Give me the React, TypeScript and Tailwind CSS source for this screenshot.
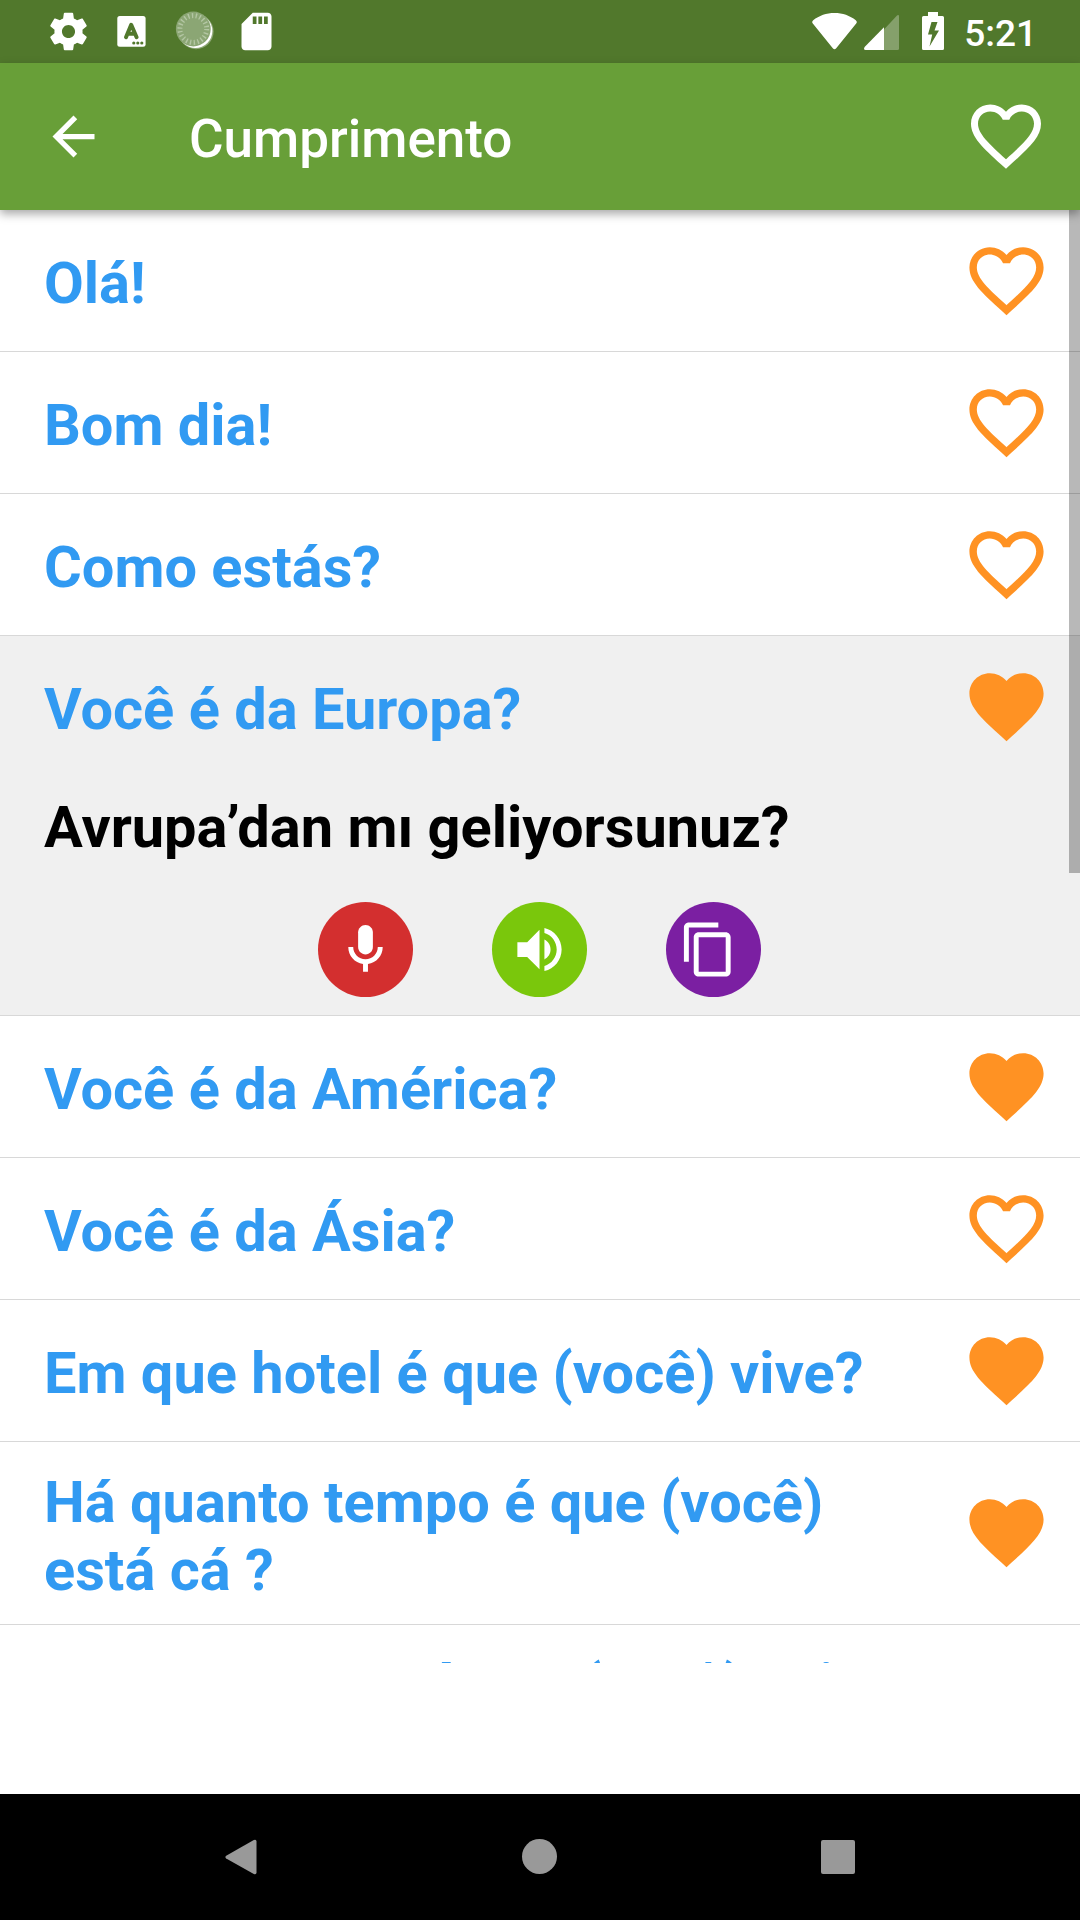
import { useState } from 'react';

type Phrase = {
    text: string;
    translation?: string;
    liked: boolean;
    tall?: boolean;
};

const phrases: Phrase[] = [
    { text: 'Olá!', liked: false },
    { text: 'Bom dia!', liked: false },
    { text: 'Como estás?', liked: false },
    { text: 'Você é da Europa?', translation: 'Avrupa’dan mı geliyorsunuz?', liked: true },
    { text: 'Você é da América?', liked: true },
    { text: 'Você é da Ásia?', liked: false },
    { text: 'Em que hotel é que (você) vive?', liked: true },
    { text: 'Há quanto tempo é que (você) está cá ?', liked: true, tall: true },
    { text: 'Quanto tempo é que (você) vai ficar cá ?', liked: false, tall: true },
];

const HeartIcon = ({ filled, className }: { filled: boolean; className: string }) => (
    <svg viewBox="0 0 24 24" fill="currentColor" className={className}>
        {filled ? (
            <path d="M12 21.35l-1.45-1.32C5.4 15.36 2 12.28 2 8.5 2 5.42 4.42 3 7.5 3c1.74 0 3.41.81 4.5 2.09C13.09 3.81 14.76 3 16.5 3 19.58 3 22 5.42 22 8.5c0 3.78-3.4 6.86-8.55 11.54L12 21.35z" />
        ) : (
            <path d="M16.5 3c-1.74 0-3.41.81-4.5 2.09C10.91 3.81 9.24 3 7.5 3 4.42 3 2 5.42 2 8.5c0 3.78 3.4 6.86 8.55 11.54L12 21.35l1.45-1.32C18.6 15.36 22 12.28 22 8.5 22 5.42 19.58 3 16.5 3zm-4.4 15.55l-.1.1-.1-.1C7.14 14.24 4 11.39 4 8.5 4 6.5 5.5 5 7.5 5c1.54 0 3.04.99 3.57 2.36h1.87C13.46 5.99 14.96 5 16.5 5c2 0 3.5 1.5 3.5 3.5 0 2.89-3.14 5.74-7.9 10.05z" />
        )}
    </svg>
);

const StatusBar = () => (
    <div className="flex h-[63px] shrink-0 items-start justify-between bg-[#51782c] text-white">
        <div className="flex gap-[17.75px] pt-[9px] pl-[46px]">
            <svg viewBox="0 0 24 24" fill="currentColor" className="size-[45px]">
                <path d="M19.43 12.98c.04-.32.07-.64.07-.98s-.03-.66-.07-.98l2.11-1.65c.19-.15.24-.42.12-.64l-2-3.46c-.12-.22-.39-.3-.61-.22l-2.49 1c-.52-.4-1.08-.73-1.69-.98l-.38-2.65C14.46 2.18 14.25 2 14 2h-4c-.25 0-.46.18-.49.42l-.38 2.65c-.61.25-1.17.59-1.69.98l-2.49-1c-.23-.09-.49 0-.61.22l-2 3.46c-.13.22-.07.49.12.64l2.11 1.65c-.04.32-.07.65-.07.98s.03.66.07.98l-2.11 1.65c-.19.15-.24.42-.12.64l2 3.46c.12.22.39.3.61.22l2.49-1c.52.4 1.08.73 1.69.98l.38 2.65c.03.24.24.42.49.42h4c.25 0 .46-.18.49-.42l.38-2.65c.61-.25 1.17-.59 1.69-.98l2.49 1c.23.09.49 0 .61-.22l2-3.46c.12-.22.07-.49-.12-.64l-2.11-1.65zM12 15.5c-1.93 0-3.5-1.57-3.5-3.5s1.57-3.5 3.5-3.5 3.5 1.57 3.5 3.5-1.57 3.5-3.5 3.5z" />
            </svg>
            <svg viewBox="0 0 45 45" className="size-[45px]">
                <rect x="8.3" y="7" width="28.3" height="30.8" rx="2.5" fill="#fff" />
                <path d="M17 28.2L22.2 15.8L27.6 28.2M18.8 24.8H26" fill="none" stroke="#51782c" strokeWidth="4" strokeLinecap="round" strokeLinejoin="round" />
                <circle cx="24.8" cy="34" r="1.6" fill="#51782c" />
                <circle cx="28.8" cy="34" r="1.6" fill="#51782c" />
                <circle cx="32.8" cy="34" r="1.6" fill="#51782c" />
            </svg>
            <svg viewBox="0 0 45 45" className="size-[45px]">
                <circle cx="24" cy="22.6" r="17.6" fill="#fff" fillOpacity="0.35" />
                <circle cx="23.4" cy="22" r="17" fill="#fff" />
                <circle cx="21.3" cy="20" r="17.4" fill="#8ba674" />
                <circle cx="21.3" cy="20" r="13.4" fill="none" stroke="#b3c6a3" strokeWidth="5" strokeDasharray="1.4 2.43" />
            </svg>
            <svg viewBox="0 0 24 24" fill="currentColor" className="size-[45px]">
                <path d="M18 2h-8L4.02 8 4 20c0 1.1.9 2 2 2h12c1.1 0 2-.9 2-2V4c0-1.1-.9-2-2-2zm-6 6h-2V4h2v4zm3 0h-2V4h2v4zm3 0h-2V4h2v4z" />
            </svg>
        </div>
        <div className="flex pt-3 pr-[43px]">
            <svg viewBox="0 0 45 38" className="mr-[7px] h-[38px] w-[45px]">
                <path d="M1.2 8.2C7 3.6 14.5 1 22.5 1S38 3.6 43.8 8.2Q45.6 9.8 44.2 11.5L24.2 36.3Q22.5 38 20.8 36.3L.8 11.5Q-.6 9.8 1.2 8.2Z" fill="#fff" />
            </svg>
            <svg viewBox="0 0 35 38" className="mr-[23px] h-[38px] w-[35px]">
                <path d="M20 17.5L33 3.5Q35 2.2 35 4.5V36.5Q35 38 33.5 38H20Z" fill="#fff" fillOpacity="0.3" />
                <path d="M20 15.3V38H1.5Q-.8 37.6.6 35Z" fill="#fff" />
            </svg>
            <svg viewBox="0 0 22 38" className="mr-[20px] h-[38px] w-[22px]">
                <path d="M6 0H16V4H20.5Q22 4 22 5.5V36.5Q22 38 20.5 38H1.5Q0 38 0 36.5V5.5Q0 4 1.5 4H6ZM9.5 10L6 22.5H10.2L7.5 34.5L17 18.5H12.5L15.5 10Z" fill="#fff" fillRule="evenodd" />
            </svg>
            <span className="text-[37px] leading-[43px] font-medium">5:21</span>
        </div>
    </div>
);

const Actions = () => (
    <div className="flex gap-[79px] pl-[318px] text-white">
        <button className="flex size-[95px] items-center justify-center rounded-full bg-[#d32f2f]">
            <svg viewBox="0 0 24 24" fill="currentColor" className="size-[59px]">
                <path d="M12 14c1.66 0 3-1.34 3-3V5c0-1.66-1.34-3-3-3S9 3.34 9 5v6c0 1.66 1.34 3 3 3z" />
                <path d="M17 11c0 2.76-2.24 5-5 5s-5-2.24-5-5H5c0 3.53 2.61 6.43 6 6.92V21h2v-3.08c3.39-.49 6-3.39 6-6.92h-2z" />
            </svg>
        </button>
        <button className="flex size-[95px] items-center justify-center rounded-full bg-[#7ac70c]">
            <svg viewBox="0 0 24 24" fill="currentColor" className="size-[59px]">
                <path d="M3 9v6h4l5 5V4L7 9H3zm13.5 3c0-1.77-1.02-3.29-2.5-4.03v8.05c1.48-.73 2.5-2.25 2.5-4.02zM14 3.23v2.06c2.89.86 5 3.54 5 6.71s-2.11 5.85-5 6.71v2.06c4.01-.91 7-4.49 7-8.77s-2.99-7.86-7-8.77z" />
            </svg>
        </button>
        <button className="flex size-[95px] items-center justify-center rounded-full bg-[#7b1fa2] pr-2.5">
            <svg viewBox="0 0 24 24" fill="currentColor" className="size-[59px]">
                <path d="M16 1H4c-1.1 0-2 .9-2 2v14h2V3h12V1zm3 4H8c-1.1 0-2 .9-2 2v14c0 1.1.9 2 2 2h11c1.1 0 2-.9 2-2V7c0-1.1-.9-2-2-2zm0 16H8V7h11v14z" />
            </svg>
        </button>
    </div>
);

const App = () => {
    const [items, setItems] = useState(phrases);

    const toggleLike = (index: number) => {
        setItems(items.map((item, i) => (i === index ? { ...item, liked: !item.liked } : item)));
    };

    return (
        <div className="flex h-[1920px] w-[1080px] flex-col overflow-hidden bg-white font-['Roboto',sans-serif]">
            <StatusBar />
            <header className="z-10 flex h-[147px] shrink-0 items-center bg-[#689f38] pr-8 pl-[42px] text-white shadow-[0_4px_9px_rgba(0,0,0,0.34)]">
                <svg viewBox="0 0 24 24" fill="currentColor" className="size-[63px]">
                    <path d="M20 11H7.83l5.59-5.59L12 4l-8 8 8 8 1.41-1.41L7.83 13H20v-2z" />
                </svg>
                <h1 className="ml-[84px] flex-1 pt-1 text-[53px] leading-[62px] font-medium">Cumprimento</h1>
                <HeartIcon filled={false} className="mb-0.5 size-[84px]" />
            </header>

            {/* The list ends above the empty banner area */}
            <main className="relative h-[1453px] shrink-0 overflow-hidden">
                {items.map((item, index) => (
                    <div key={index} className={`border-b border-[#d8d8d8] ${item.translation ? 'h-[380px] bg-[#f0f0f0]' : ''}`}>
                        <div className={`flex items-center justify-between pr-[29px] pl-11 ${item.tall ? 'h-[182px]' : 'h-[141px]'}`}>
                            <p className={`w-[860px] text-[57.75px] leading-[68px] font-bold text-[#319af2] ${item.tall ? 'pt-1.5' : 'pt-1'}`}>{item.text}</p>
                            <button onClick={() => toggleLike(index)} className={`text-[#ff9223] ${item.tall ? 'mb-0.5' : ''}`}>
                                <HeartIcon filled={item.liked} className="size-[89px]" />
                            </button>
                        </div>
                        {item.translation && (
                            <>
                                <p className="mt-4 mb-[41px] pl-11 text-[57.75px] leading-[68px] font-bold text-black">{item.translation}</p>
                                <Actions />
                            </>
                        )}
                    </div>
                ))}
                <div className="absolute top-0 right-0 h-[663px] w-[11px] bg-black/28"></div>
            </main>

            <div className="flex-1"></div>

            <nav className="flex h-[126px] shrink-0 items-center justify-between bg-black px-[225px] pb-px text-[#999]">
                <svg viewBox="0 0 32 36" fill="currentColor" className="h-9 w-8">
                    <path d="M1.2 16.7L28.8 1Q31.5 0 31.5 2.5V33.5Q31.5 36 28.8 35L1.2 19.5Q-.5 18.1 1.2 16.7Z" />
                </svg>
                <div className="size-[35px] rounded-full bg-[#999]"></div>
                <div className="size-[34px] rounded-[2px] bg-[#999]"></div>
            </nav>
        </div>
    );
};

export default App;
